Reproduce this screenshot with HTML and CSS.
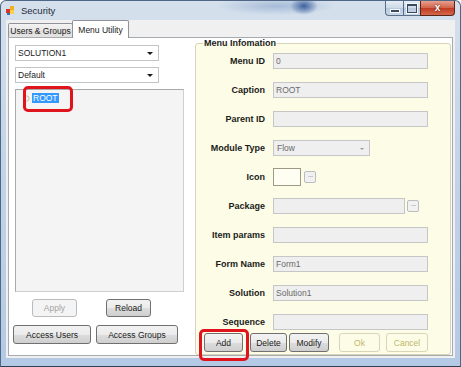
FILE: index.html
```html
<!DOCTYPE html>
<html lang="en">
<head>
    <meta charset="UTF-8">
    <title>Security</title>
    <link rel="stylesheet" href="styles.css">
</head>
<body>
    <div class="window">
        <div class="titlebar">
            <svg class="app-icon" width="9" height="9" viewBox="0 0 9 9">
                <rect x="0" y="3" width="4" height="4" fill="#d8342c"/>
                <rect x="4" y="0" width="4" height="4" fill="#f2b01e"/>
                <rect x="4" y="4" width="4" height="4" fill="#f6d34a"/>
                <rect x="1" y="7" width="3" height="2" fill="#3a6fc4"/>
            </svg>
            <span class="title">Security</span>
            <div class="caption-buttons">
                <span class="cap-btn cap-min"></span>
                <span class="cap-btn cap-max"></span>
                <span class="cap-btn cap-close">x</span>
            </div>
        </div>

        <div class="client">
            <div class="tabs">
                <div class="tab">Users &amp; Groups</div>
                <div class="tab active">Menu Utility</div>
            </div>

            <div class="tab-page">
                <div class="left-pane">
                    <div class="combo">SOLUTION1<span class="arrow"></span></div>
                    <div class="combo second">Default<span class="arrow"></span></div>

                    <div class="tree">
                        <div class="tree-item">
                            <svg class="node-icon" width="7" height="7" viewBox="0 0 7 7">
                                <circle cx="3.5" cy="3.5" r="2.6" fill="none" stroke="#c9b9a8" stroke-width="1"/>
                            </svg>
                            <span class="node-label">ROOT</span>
                        </div>
                        <div class="mark mark-root"></div>
                    </div>

                    <div class="btn-row apply-row">
                        <button class="btn disabled apply">Apply</button>
                        <button class="btn reload">Reload</button>
                    </div>
                    <div class="btn-row access-row">
                        <button class="btn access-users">Access Users</button>
                        <button class="btn access-groups">Access Groups</button>
                    </div>
                </div>

                <fieldset class="menu-info">
                    <legend>Menu Infomation</legend>
                    <div class="fields">
                        <div class="field">
                            <label>Menu ID</label>
                            <div class="textbox">0</div>
                        </div>
                        <div class="field">
                            <label>Caption</label>
                            <div class="textbox">ROOT</div>
                        </div>
                        <div class="field">
                            <label>Parent ID</label>
                            <div class="textbox"></div>
                        </div>
                        <div class="field">
                            <label>Module Type</label>
                            <div class="textbox type-combo">Flow<span class="arrow grey"></span></div>
                        </div>
                        <div class="field">
                            <label>Icon</label>
                            <div class="icon-box"></div>
                            <span class="dots icon-dots">&middot;&middot;&middot;</span>
                        </div>
                        <div class="field">
                            <label>Package</label>
                            <div class="textbox package"></div>
                            <span class="dots">&middot;&middot;&middot;</span>
                        </div>
                        <div class="field">
                            <label>Item params</label>
                            <div class="textbox"></div>
                        </div>
                        <div class="field">
                            <label>Form Name</label>
                            <div class="textbox">Form1</div>
                        </div>
                        <div class="field">
                            <label>Solution</label>
                            <div class="textbox">Solution1</div>
                        </div>
                        <div class="field">
                            <label>Sequence</label>
                            <div class="textbox"></div>
                        </div>
                    </div>

                    <div class="btn-row actions">
                        <div class="add-wrap">
                            <button class="btn add">Add</button>
                            <div class="mark mark-add"></div>
                        </div>
                        <button class="btn delete">Delete</button>
                        <button class="btn modify">Modify</button>
                        <button class="btn faded ok">Ok</button>
                        <button class="btn faded cancel">Cancel</button>
                    </div>
                </fieldset>
            </div>
        </div>
    </div>
</body>
</html>
```

FILE: styles.css
```css
* {
    box-sizing: border-box;
}
body {
    margin: 0;
    font-family: "Liberation Sans", Arial, sans-serif;
    font-size: 8.5px;
    color: #1b1b1b;
    background: #fff;
    overflow: hidden;
}

/* window frame */
.window {
    width: 461px;
    height: 367px;
    display: flex;
    flex-direction: column;
    padding: 0 5px 8px;
    border: 1px solid #4f6684;
    border-bottom-color: #2e3e55;
    border-radius: 6px 6px 0 0;
    background: linear-gradient(#d5e0ec, #c4d5e8 40%, #b3c9e4);
}
.titlebar {
    height: 19px;
    flex-shrink: 0;
    display: flex;
    align-items: flex-start;
    background:
        radial-gradient(ellipse 14px 9px at 298px 5px, rgba(30, 70, 140, 0.8), rgba(30, 70, 140, 0)),
        radial-gradient(ellipse 60px 9px at 270px 5px, rgba(80, 120, 180, 0.35), rgba(80, 120, 180, 0));
}
.app-icon {
    margin: 5px 0 0 0;
}
.title {
    margin: 4px 0 0 6px;
    font-size: 9.5px;
    line-height: 12px;
    color: #1f2b3a;
}
.caption-buttons {
    margin-left: auto;
    display: flex;
    height: 15px;
}
.cap-btn {
    height: 15px;
    display: flex;
    align-items: center;
    justify-content: center;
    border: 1px solid #5a6e89;
    border-top: none;
    background: linear-gradient(#e6edf6, #cdd9e7 50%, #b9c9dc 51%, #c9d7e8);
}
.cap-min {
    width: 18px;
    border-right: none;
    border-bottom-left-radius: 4px;
}
.cap-max {
    width: 17px;
    border-right: none;
}
.cap-close {
    width: 35px;
    border-color: #5b2418;
    border-bottom-right-radius: 4px;
    background: linear-gradient(#e8a08e, #d06349 50%, #c03a22 51%, #d4684a);
    color: #fff;
    font-weight: bold;
    font-size: 10px;
    line-height: 10px;
    text-shadow: 0 0 2px #3a1008;
}
.cap-min::after {
    content: "";
    width: 8px;
    height: 2px;
    margin-top: 5px;
    background: #394a60;
    box-shadow: 0 0 0 1px #f4f7fb;
}
.cap-max::after {
    content: "";
    width: 8px;
    height: 6px;
    border: 1px solid #394a60;
    border-top-width: 2px;
    box-shadow: 0 0 0 1px #f4f7fb;
}

/* client area */
.client {
    flex: 1;
    display: flex;
    flex-direction: column;
    padding: 0 2px 2px;
    background: #f0f0f0;
}
.tabs {
    height: 17px;
    flex-shrink: 0;
    display: flex;
    align-items: flex-end;
}
.tab {
    height: 14px;
    width: 65px;
    display: flex;
    align-items: center;
    justify-content: center;
    border: 1px solid #8e939b;
    border-bottom: none;
    border-radius: 2px 2px 0 0;
    background: linear-gradient(#f3f3f3, #e8e8e8 50%, #dcdcdc 51%, #e4e4e4);
    color: #1b1b1b;
}
.tab.active {
    height: 18px;
    width: 57px;
    margin-left: -1px;
    margin-bottom: -1px;
    background: #fff;
    position: relative;
    z-index: 1;
}
.tab-page {
    flex: 1;
    display: flex;
    border: 1px solid #a7abb0;
    background: #fff;
}

/* left side */
.left-pane {
    width: 186px;
    display: flex;
    flex-direction: column;
    padding-top: 7px;
}
.combo {
    width: 144px;
    height: 16px;
    margin-left: 6px;
    padding-left: 2px;
    display: flex;
    align-items: center;
    border: 1px solid #c4c4c4;
    background: #fff;
    position: relative;
}
.combo.second {
    margin-top: 6px;
}
.arrow {
    position: absolute;
    right: 5px;
    top: 6px;
    border-left: 3px solid transparent;
    border-right: 3px solid transparent;
    border-top: 3px solid #1b1b1b;
}
.arrow.grey {
    border-top-color: #9a9a9a;
    border-left-width: 2px;
    border-right-width: 2px;
    border-top-width: 2px;
    top: 7px;
}
.tree {
    width: 169px;
    height: 203px;
    margin: 6px 0 0 6px;
    padding: 3px 0 0 7px;
    border: 1px solid #a9a9a9;
    border-right-color: #cfcfcf;
    border-bottom-color: #cfcfcf;
    background: #f4f4f4;
    position: relative;
}
.tree-item {
    display: flex;
    align-items: center;
    gap: 2px;
    height: 10px;
}
.node-label {
    height: 10px;
    line-height: 10px;
    padding: 0 1px;
    background: #3399ff;
    color: #fff;
}

/* red highlight marks */
.mark {
    position: absolute;
    border: 3px solid #e0141c;
    border-radius: 5px;
}
.mark-root {
    left: 7px;
    top: -4px;
    width: 50px;
    height: 26px;
}
.mark-add {
    left: -5px;
    top: -4px;
    width: 50px;
    height: 32px;
}

/* buttons */
.btn-row {
    display: flex;
}
.btn {
    height: 18px;
    padding: 0;
    font-family: inherit;
    font-size: 8.5px;
    color: #1b1b1b;
    border: 1px solid #707070;
    border-radius: 3px;
    background: linear-gradient(#f2f2f2, #ebebeb 50%, #dddddd 51%, #cfcfcf);
}
.btn.disabled {
    border-color: #b8bcbf;
    background: #f4f4f4;
    color: #a3a3a3;
}
.btn.faded {
    border-color: #d9d5bb;
    background: #fdfce6;
    color: #bdb86c;
}
.apply-row {
    margin: 7px 0 0 23px;
    gap: 29px;
}
.apply,
.reload {
    width: 45px;
}
.access-row {
    margin: 8px 0 0 4px;
    gap: 5px;
}
.access-row .btn {
    height: 19px;
}
.access-users {
    width: 78px;
}
.access-groups {
    width: 82px;
}

/* right side */
.menu-info {
    width: 256px;
    margin: 0 1px 0 0;
    padding: 0 0 2px;
    min-width: 0;
    border: 1px solid #d8d4bb;
    border-radius: 3px;
    background: #fdfce6;
}
.menu-info legend {
    margin-left: 7px;
    padding: 0 1px;
    font-weight: bold;
    font-size: 9px;
    line-height: 11px;
}
.fields {
    display: flex;
    flex-direction: column;
    gap: 12px;
    padding-top: 3px;
}
.field {
    height: 17px;
    display: flex;
    align-items: center;
    gap: 8px;
}
.field label {
    width: 69px;
    text-align: right;
    font-weight: bold;
    font-size: 9px;
}
.textbox {
    width: 155px;
    height: 16px;
    padding-left: 2px;
    display: flex;
    align-items: center;
    border: 1px solid #c6c6c6;
    background: #efefef;
    color: #6a6a6a;
    position: relative;
}
.textbox.package {
    width: 132px;
}
.type-combo {
    width: 97px;
    padding-left: 3px;
}
.icon-box {
    width: 28px;
    height: 18px;
    border: 1px solid #9e9a86;
    background: #fffef2;
}
.dots {
    width: 12px;
    height: 12px;
    margin-left: -6px;
    display: flex;
    align-items: center;
    justify-content: center;
    border: 1px solid #bcbcbc;
    border-radius: 2px;
    background: #f1f1f1;
    color: #8a8a8a;
    font-size: 8px;
    letter-spacing: -1px;
}
.icon-dots {
    margin-left: -5px;
}
.actions {
    margin-top: 3px;
    padding-left: 8px;
}
.actions .btn {
    height: 19px;
}
.add-wrap {
    position: relative;
}
.add {
    width: 39px;
}
.delete {
    width: 37px;
    margin-left: 7px;
}
.modify {
    width: 40px;
    margin-left: 2px;
}
.ok {
    width: 41px;
    margin-left: 10px;
}
.cancel {
    width: 42px;
    margin-left: 6px;
}
```
